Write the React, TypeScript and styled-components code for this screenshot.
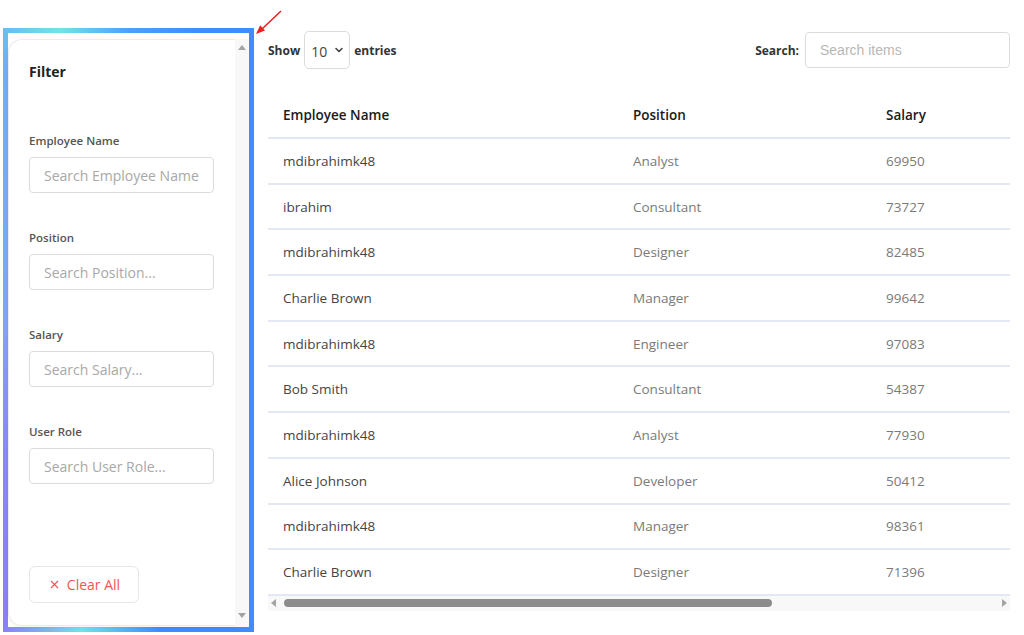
import React from 'react';
import styled, { createGlobalStyle } from 'styled-components';
import { ChevronDown, X } from 'lucide-react';

const GlobalStyle = createGlobalStyle`
  html, body {
    margin: 0;
    padding: 0;
    background: #ffffff;
  }
  body {
    font-family: 'Open Sans', 'Noto Sans', sans-serif;
    color: #333;
  }
  * {
    box-sizing: border-box;
  }
`;

const employees = [
  { name: 'mdibrahimk48', position: 'Analyst', salary: 69950 },
  { name: 'ibrahim', position: 'Consultant', salary: 73727 },
  { name: 'mdibrahimk48', position: 'Designer', salary: 82485 },
  { name: 'Charlie Brown', position: 'Manager', salary: 99642 },
  { name: 'mdibrahimk48', position: 'Engineer', salary: 97083 },
  { name: 'Bob Smith', position: 'Consultant', salary: 54387 },
  { name: 'mdibrahimk48', position: 'Analyst', salary: 77930 },
  { name: 'Alice Johnson', position: 'Developer', salary: 50412 },
  { name: 'mdibrahimk48', position: 'Manager', salary: 98361 },
  { name: 'Charlie Brown', position: 'Designer', salary: 71396 },
];

const filters = ['Employee Name', 'Position', 'Salary', 'User Role'];

function Triangle({ dir }: { dir: 'up' | 'down' | 'left' | 'right' }) {
  const points = {
    up: '0,5 4,0 8,5',
    down: '0,0 8,0 4,5',
    left: '5,0 5,8 0,4',
    right: '0,0 0,8 5,4',
  }[dir];
  const vertical = dir === 'up' || dir === 'down';
  return (
    <svg width={vertical ? 8 : 5} height={vertical ? 5 : 8} viewBox={vertical ? '0 0 8 5' : '0 0 5 8'}>
      <polygon points={points} fill="currentColor" />
    </svg>
  );
}

export default function App() {
  return (
    <>
      <GlobalStyle />
      <Page>
        <Pointer width="30" height="30" viewBox="0 0 30 30">
          <line x1="27" y1="3" x2="8" y2="21" stroke="#e8231f" strokeWidth="1.6" />
          <polygon points="2,26 6.2,17.3 11,22.5" fill="#e8231f" />
        </Pointer>

        <Frame>
          <FrameInner>
            <FilterPanel>
              <PanelTitle>Filter</PanelTitle>
              <FilterList>
                {filters.map((label) => (
                  <FilterGroup key={label}>
                    <FilterLabel>{label}</FilterLabel>
                    <FilterInput placeholder={`Search ${label}...`} />
                  </FilterGroup>
                ))}
              </FilterList>
              <ClearButton type="button">
                <X size={13} strokeWidth={2} />
                Clear All
              </ClearButton>
            </FilterPanel>
            <VScroll>
              <Triangle dir="up" />
              <Triangle dir="down" />
            </VScroll>
          </FrameInner>
        </Frame>

        <Main>
          <Toolbar>
            <ToolGroup>
              <ToolLabel>Show</ToolLabel>
              <SelectBox>
                <PageSize defaultValue="10">
                  <option value="10">10</option>
                  <option value="25">25</option>
                  <option value="50">50</option>
                </PageSize>
                <ChevronDown size={12} strokeWidth={3.2} />
              </SelectBox>
              <ToolLabel>entries</ToolLabel>
            </ToolGroup>
            <ToolGroup $gap={6}>
              <ToolLabel>Search:</ToolLabel>
              <SearchInput placeholder="Search items" />
            </ToolGroup>
          </Toolbar>

          <TableWrap>
            <Table>
              <colgroup>
                <col style={{ width: 350 }} />
                <col style={{ width: 253 }} />
                <col />
              </colgroup>
              <thead>
                <tr>
                  <HeadCell>Employee Name</HeadCell>
                  <HeadCell>Position</HeadCell>
                  <HeadCell>Salary</HeadCell>
                </tr>
              </thead>
              <tbody>
                {employees.map((e, i) => (
                  <tr key={i}>
                    <Cell $strong>{e.name}</Cell>
                    <Cell>{e.position}</Cell>
                    <Cell>{e.salary}</Cell>
                  </tr>
                ))}
              </tbody>
            </Table>
            <HScroll>
              <Triangle dir="left" />
              <Thumb />
              <Triangle dir="right" />
            </HScroll>
          </TableWrap>
        </Main>
      </Page>
    </>
  );
}

const Page = styled.div`
  position: relative;
  display: flex;
  gap: 14px;
  height: 635px;
  padding: 28px 14px 0 3px;
`;

const Pointer = styled.svg`
  position: absolute;
  left: 254px;
  top: 8px;
`;

const Frame = styled.div`
  width: 251px;
  height: 604px;
  padding: 5px;
  flex-shrink: 0;
  background: conic-gradient(
    from 0deg,
    #4f9ffa 0deg,
    #3e8cff 14deg,
    #3e8cff 174deg,
    #6fe2e8 189deg,
    #8b7ef8 203deg,
    #86a0f7 270deg,
    #69b2f5 335deg,
    #70e4e6 347deg,
    #4f9ffa 360deg
  );
`;

const FrameInner = styled.div`
  display: flex;
  height: 100%;
  background: #ffffff;
  padding-top: 6px;
`;

const FilterPanel = styled.div`
  flex: 1;
  display: flex;
  flex-direction: column;
  height: 587px;
  padding: 22px 20px 22px 20px;
  border: 1px solid #ececec;
  border-right: none;
  border-radius: 14px 0 0 14px;
  box-shadow: 0 1px 3px rgba(0, 0, 0, 0.06);
  background: #ffffff;
`;

const PanelTitle = styled.h3`
  margin: 0;
  font-size: 14px;
  line-height: 20px;
  font-weight: 700;
  color: #222;
`;

const FilterList = styled.div`
  display: flex;
  flex-direction: column;
  gap: 37px;
  margin-top: 51px;
`;

const FilterGroup = styled.div`
  display: flex;
  flex-direction: column;
  gap: 8px;
`;

const FilterLabel = styled.label`
  font-size: 11.5px;
  line-height: 16px;
  font-weight: 600;
  color: #555;
`;

const FilterInput = styled.input`
  width: 185px;
  height: 36px;
  padding: 0 14px;
  border: 1px solid #dcdcdc;
  border-radius: 4px;
  font-family: 'Open Sans', sans-serif;
  font-size: 14px;
  color: #333;
  outline: none;

  &::placeholder {
    color: #a8a8a8;
  }
`;

const ClearButton = styled.button`
  display: flex;
  align-items: center;
  justify-content: center;
  gap: 6px;
  margin-top: auto;
  width: 110px;
  height: 37px;
  border: 1px solid #e6e6e6;
  border-radius: 6px;
  background: #ffffff;
  color: #f05555;
  font-family: 'Open Sans', sans-serif;
  font-size: 14px;
  font-weight: 500;
  cursor: pointer;
`;

const VScroll = styled.div`
  width: 14px;
  display: flex;
  flex-direction: column;
  align-items: center;
  justify-content: space-between;
  padding: 6px 0 9px;
  background: #f8f8f8;
  color: #a3a3a3;
`;

const Main = styled.main`
  flex: 1;
  display: flex;
  flex-direction: column;
  min-width: 0;
`;

const Toolbar = styled.div`
  display: flex;
  align-items: center;
  justify-content: space-between;
  height: 38px;
  margin-top: 3px;
`;

const ToolGroup = styled.div<{ $gap?: number }>`
  display: flex;
  align-items: center;
  gap: ${(p) => p.$gap ?? 4}px;
`;

const ToolLabel = styled.span`
  font-size: 12px;
  font-weight: 700;
  color: #333;
`;

const SelectBox = styled.div`
  display: flex;
  align-items: center;
  justify-content: space-between;
  width: 46px;
  height: 38px;
  padding: 0 4px 0 6px;
  border: 1px solid #dcdcdc;
  border-radius: 5px;
  color: #444;
`;

const PageSize = styled.select`
  appearance: none;
  border: none;
  background: transparent;
  width: 22px;
  padding: 3px 0 0 0;
  font-family: 'Open Sans', sans-serif;
  font-size: 14px;
  color: #444;
  outline: none;
`;

const SearchInput = styled.input`
  width: 205px;
  height: 36px;
  padding: 0 14px;
  border: 1px solid #dcdcdc;
  border-radius: 4px;
  font-family: 'Liberation Sans', Arial, sans-serif;
  font-size: 14px;
  outline: none;

  &::placeholder {
    color: #b8b8b8;
  }
`;

const TableWrap = styled.div`
  margin-top: 24px;
  overflow: hidden;
`;

const Table = styled.table`
  width: 100%;
  border-collapse: separate;
  border-spacing: 0;
  table-layout: fixed;
`;

const HeadCell = styled.th`
  height: 46px;
  padding: 0 15px;
  border-bottom: 2px solid #e1e5f4;
  text-align: left;
  font-size: 13.5px;
  font-weight: 600;
  color: #1a1a1a;
`;

const Cell = styled.td<{ $strong?: boolean }>`
  height: 45.7px;
  padding: 0 15px;
  border-bottom: 2px solid #e4e7f4;
  font-size: 13.5px;
  color: ${(p) => (p.$strong ? '#444' : '#7a7a7a')};
  white-space: nowrap;
`;

const HScroll = styled.div`
  display: flex;
  align-items: center;
  height: 15px;
  padding: 0 3px;
  background: #f8f8f8;
  color: #a3a3a3;

  & > svg:last-child {
    margin-left: auto;
  }
`;

const Thumb = styled.div`
  width: 488px;
  height: 8px;
  margin-left: 8px;
  border-radius: 4px;
  background: #8c8c8c;
`;
